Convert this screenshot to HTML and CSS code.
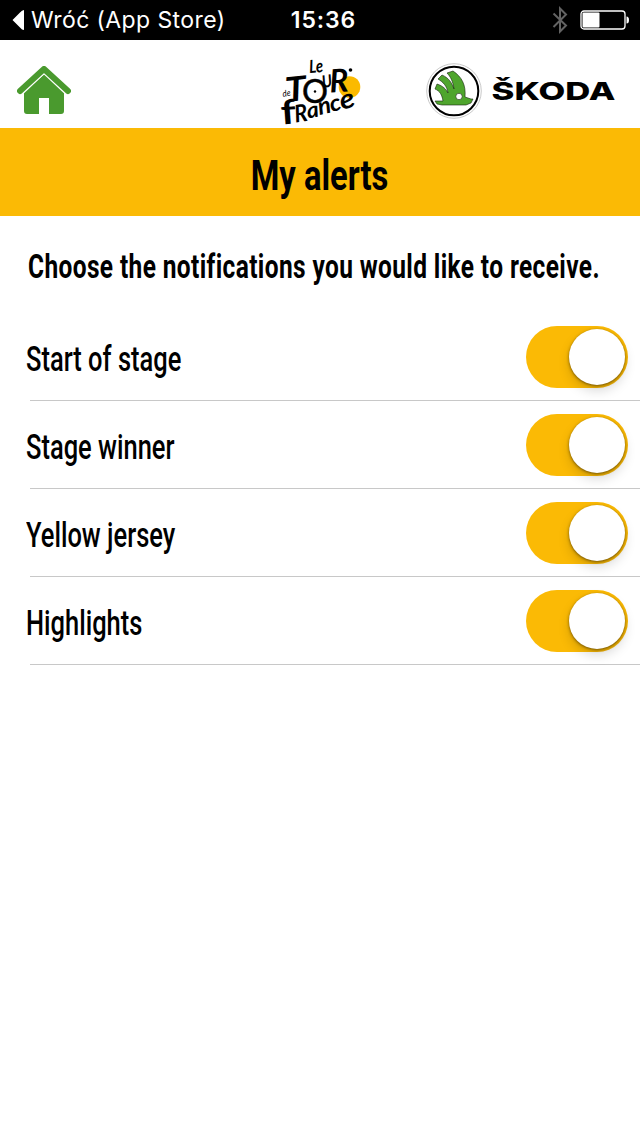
FILE: index.html
```html
<!DOCTYPE html>
<html lang="en">
<head>
<meta charset="UTF-8">
<meta name="viewport" content="width=device-width, initial-scale=1.0">
<title>My alerts</title>
<link rel="stylesheet" href="styles.css">
</head>
<body>
<div class="status-bar">
  <div class="back">
    <svg width="12" height="22" viewBox="0 0 12 22"><path d="M12 1v20q-2 0-4-2.500L.5 11 8 3.500Q10 1 12 1z" fill="#fff"/></svg>
    <span>Wróć (App Store)</span>
  </div>
  <div class="time">15:36</div>
  <div class="icons">
    <svg width="16" height="28" viewBox="0 0 16 28"><path d="M1.500 7.500l12.500 12-6 6V2.500l6 6L1.500 21" fill="none" stroke="#636363" stroke-width="2"/></svg>
    <svg width="50" height="20" viewBox="0 0 50 20">
      <rect x="1" y="1" width="44" height="18" rx="3" fill="none" stroke="#fff" stroke-width="1.300"/>
      <rect x="2.500" y="2.500" width="17" height="15" rx="1" fill="#fff"/>
      <path d="M46.500 6.500q2.500 0 2.500 3.500t-2.500 3.500z" fill="#fff"/>
    </svg>
  </div>
</div>

<header class="header">
  <a class="home" href="#">
    <svg width="54" height="50" viewBox="0 0 54 50" fill="#4a9a2e">
      <path d="M7 26L27.500 8 47 26v19q0 3-3 3H32V32H22v16H10q-3 0-3-3z"/>
      <path d="M3 25.500L27 3l24 22.500" fill="none" stroke="#fff" stroke-width="8" stroke-linecap="round" stroke-linejoin="round"/>
      <path d="M3 25L27 3l24 22" fill="none" stroke="#4a9a2e" stroke-width="6" stroke-linecap="round" stroke-linejoin="round"/>
    </svg>
  </a>
  <svg class="tour" width="82" height="70" viewBox="0 0 82 70">
    <circle cx="69.500" cy="31" r="10.800" fill="#fbba00"/>
    <g class="brush">
      <text transform="translate(29.500 17) rotate(-4)" font-size="18" textLength="14" lengthAdjust="spacingAndGlyphs">Le</text>
      <text class="small" transform="translate(3 41) rotate(-10)" font-size="9" textLength="8" lengthAdjust="spacingAndGlyphs">de</text>
      <text transform="translate(6.500 46) rotate(-6)" font-size="34" textLength="21" lengthAdjust="spacingAndGlyphs">T</text>
      <text class="wheel" x="22" y="47" font-size="32" textLength="26" lengthAdjust="spacingAndGlyphs">O</text>
      <text transform="translate(43 32) rotate(-10)" font-size="17" textLength="10" lengthAdjust="spacingAndGlyphs">U</text>
      <text transform="translate(50 36.500) rotate(-3)" font-size="32" textLength="19" lengthAdjust="spacingAndGlyphs">R</text>
      <text class="upright" transform="translate(1.500 68.500) rotate(-4)" font-size="34" textLength="15" lengthAdjust="spacingAndGlyphs">f</text>
      <text transform="translate(15.500 66.500) rotate(-8)" font-size="24" textLength="13" lengthAdjust="spacingAndGlyphs">R</text>
      <text transform="translate(28 62.500) rotate(-10)" font-size="22" textLength="12" lengthAdjust="spacingAndGlyphs">a</text>
      <text transform="translate(39.500 59) rotate(-12)" font-size="24" textLength="13" lengthAdjust="spacingAndGlyphs">n</text>
      <text transform="translate(51.500 56) rotate(-14)" font-size="23" textLength="11" lengthAdjust="spacingAndGlyphs">c</text>
      <text transform="translate(62 54) rotate(-16)" font-size="27" textLength="15" lengthAdjust="spacingAndGlyphs">e</text>
    </g>
    <circle cx="35" cy="35.500" r="1.200"/>
    <circle cx="70.500" cy="14" r="1.800"/>
  </svg>
  <svg class="skoda" width="192" height="56" viewBox="0 0 192 56">
    <circle cx="28" cy="28" r="27.300" fill="#fff" stroke="#bbb" stroke-width=".8"/>
    <circle cx="28" cy="28" r="24.300" fill="none" stroke="#000" stroke-width="2"/>
    <g stroke="#16220f" stroke-width=".6" fill="#4fa52d">
      <path d="M17 38c-1-6-3-10-8-12l2-5c6 2 9 5 11 9-1-7-5-11-10-14l4-4c7 3 10 8 12 14-1-8-4-13-7-16l6-2c9 6 13 14 12 26l6 2h2l-2 4-5 2H16l-5-1-2-3z"/>
      <circle cx="33" cy="33.500" r="3.200" fill="#fff"/>
    </g>
    <text class="skoda-name" x="65.500" y="37" textLength="124" lengthAdjust="spacingAndGlyphs">ŠKODA</text>
  </svg>
</header>

<h1 class="title"><span>My alerts</span></h1>

<main class="alerts">
  <p class="intro"><span>Choose the notifications you would like to receive.</span></p>
  <ul class="list">
    <li class="row"><span class="label">Start of stage</span><span class="toggle"></span></li>
    <li class="row"><span class="label">Stage winner</span><span class="toggle"></span></li>
    <li class="row"><span class="label">Yellow jersey</span><span class="toggle"></span></li>
    <li class="row"><span class="label">Highlights</span><span class="toggle"></span></li>
  </ul>
</main>
</body>
</html>
```
FILE: styles.css
```css
body {
  margin: 0;
  background: #fff;
  color: #000;
  font-family: Roboto, "Liberation Sans", sans-serif;
}

svg {
  display: block;
}

/* Status bar */
.status-bar {
  display: grid;
  grid-template-columns: 1fr auto 1fr;
  align-items: center;
  height: 40px;
  padding: 0 10px 0 12px;
  background: #000;
  color: #fff;
  font-family: Inter, sans-serif;
  font-size: 23px;
}

.back {
  display: flex;
  align-items: center;
  gap: 7px;
  letter-spacing: 0.4px;
  white-space: nowrap;
}

.time {
  padding-left: 5px;
  font-weight: 600;
  letter-spacing: 0.9px;
}

.icons {
  display: flex;
  justify-content: flex-end;
  align-items: center;
  gap: 12px;
}

/* Logos */
.header {
  display: flex;
  align-items: center;
  justify-content: space-between;
  height: 88px;
  padding: 0 22px 0 17px;
  box-sizing: border-box;
}

.home {
  margin-top: 14px;
}

.tour {
  margin: 14px 0 0 145px;
  overflow: visible;
}

.brush {
  font-family: Lato, sans-serif;
  font-style: italic;
  font-weight: bold;
}

.small {
  font-weight: normal;
}

.wheel {
  font-style: normal;
  font-weight: normal;
  stroke: #000;
  stroke-width: 0.5px;
}

.upright {
  font-style: normal;
}

.skoda {
  margin-top: 14px;
}

.skoda-name {
  font-family: Inter, sans-serif;
  font-size: 25px;
  font-weight: 800;
}

/* Title */
.title {
  display: flex;
  align-items: center;
  justify-content: center;
  height: 88px;
  margin: 0;
  padding-top: 5px;
  box-sizing: border-box;
  background: #fbba05;
  font-size: 43px;
  font-weight: 700;
}

.title span {
  transform: scaleX(0.76);
}

/* Alert list */
.intro {
  height: 97px;
  margin: 0;
  padding: 30px 0 0 28px;
  box-sizing: border-box;
  overflow: hidden;
  font-size: 34px;
  font-weight: 700;
  line-height: 40px;
  white-space: nowrap;
}

.intro span {
  display: inline-block;
  letter-spacing: 0.53px;
  transform: scaleX(0.72);
  transform-origin: left;
}

.list {
  margin: 0;
  padding: 0 0 0 30px;
  list-style: none;
}

.row {
  display: flex;
  align-items: center;
  justify-content: space-between;
  height: 88px;
  padding-right: 12px;
  box-sizing: border-box;
  border-bottom: 1px solid #c8c8c8;
}

.label {
  margin: 5px 0 0 -4px;
  font-size: 35px;
  font-weight: 500;
  transform: scaleX(0.728);
  transform-origin: left;
}

.toggle {
  display: flex;
  justify-content: flex-end;
  width: 102px;
  height: 62px;
  padding: 3px;
  box-sizing: border-box;
  border-radius: 31px;
  background: #fbba05;
}

.toggle::after {
  content: "";
  width: 56px;
  height: 56px;
  border-radius: 50%;
  background: #fff;
  box-shadow: 0 1px 3px rgba(70, 50, 0, 0.7), 0 6px 12px rgba(0, 0, 0, 0.15);
}
```
